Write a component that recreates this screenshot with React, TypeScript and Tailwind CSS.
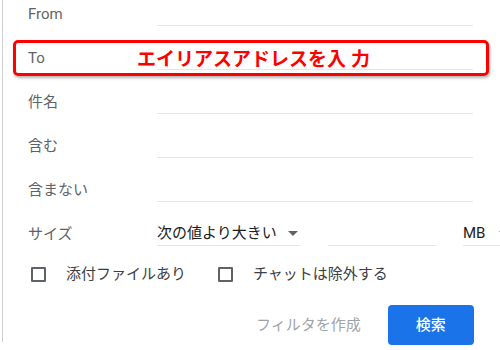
import React from "react";

const font = { fontFamily: '"Roboto", "Noto Sans CJK JP", sans-serif' };

function Caret() {
  return (
    <svg width="10" height="6" viewBox="0 0 10 6" className="shrink-0">
      <path d="M0 0 L10 0 L5 5 Z" fill="#5f6368" />
    </svg>
  );
}

function Row({ label }: { label: string }) {
  return (
    <div className="flex h-[44px] items-center">
      <div className="w-[129px] shrink-0 text-[15px] text-[#5f6368]">{label}</div>
      <div className="h-[24px] w-[316px] shrink-0 border-b border-[#e6e6e6]" />
    </div>
  );
}

function Check({ label }: { label: string }) {
  return (
    <div className="flex items-center">
      <div className="h-[15px] w-[15px] shrink-0 rounded-[1px] border-2 border-[#5f6368]" />
      <span className="ml-[20px] text-[15px] text-[#3c4043]">{label}</span>
    </div>
  );
}

export default function App() {
  return (
    <div className="relative h-[350px] w-[500px] overflow-hidden bg-white" style={font}>
      <div className="ml-[2px] h-full border-l border-[#cfcfcf] pl-[25px]">
        <div className="mt-[-8px] flex flex-col">
          <Row label="From" />
          <Row label="To" />
          <Row label="件名" />
          <Row label="含む" />
          <Row label="含まない" />
          <div className="flex h-[44px] items-center">
            <div className="w-[129px] shrink-0 text-[15px] text-[#5f6368]">サイズ</div>
            <div className="flex h-[24px] w-[143px] shrink-0 items-center justify-between border-b border-[#e6e6e6] pr-[2px] text-[15px] text-[#202124]">
              <span>次の値より大きい</span>
              <Caret />
            </div>
            <div className="ml-[28px] h-[24px] w-[108px] shrink-0 border-b border-[#e6e6e6]" />
            <div className="ml-[27px] flex h-[24px] w-[50px] shrink-0 items-center gap-[14px] border-b border-[#e6e6e6] text-[15px] text-[#202124]">
              <span>MB</span>
              <Caret />
            </div>
          </div>
          <div className="mt-[-2px] flex h-[40px] items-center pl-[3px]">
            <div className="w-[187px] shrink-0">
              <Check label="添付ファイルあり" />
            </div>
            <Check label="チャットは除外する" />
          </div>
          <div className="mt-[11px] flex items-center">
            <span className="ml-[228px] shrink-0 text-[15px] text-[#a0a4a8]">フィルタを作成</span>
            <button className="ml-[27px] h-[40px] w-[86px] shrink-0 rounded-[4px] bg-[#1a73e8] text-[15px] font-medium text-white">
              検索
            </button>
          </div>
        </div>
      </div>
      <div className="absolute left-[13px] top-[40px] flex h-[36px] w-[476px] items-center rounded-[5px] border-[3px] border-[#ff0000] pl-[121px] shadow-[1px_2px_3px_rgba(0,0,0,0.3)]">
        <span
          className="text-[19px] font-bold text-[#ff0000]"
          style={{ fontFamily: '"Noto Sans CJK JP", sans-serif' }}
        >
          エイリアスアドレスを入<span className="ml-[5px]">力</span>
        </span>
      </div>
    </div>
  );
}
